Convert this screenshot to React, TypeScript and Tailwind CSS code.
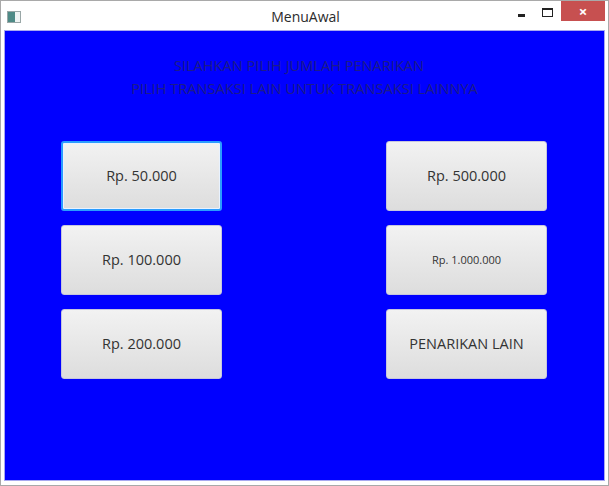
import React from 'react';

const amountsLeft = ['Rp. 50.000', 'Rp. 100.000', 'Rp. 200.000'];

function AmountButton({ label, focused = false, small = false }: { label: string; focused?: boolean; small?: boolean }) {
  return (
    <button
      className={`w-[161px] h-[70px] rounded-[3px] bg-gradient-to-b from-[#f2f2f2] to-[#dddddd] text-[#333333] flex items-center justify-center ${
        focused ? 'border-2 border-[#2a9cff] shadow-[inset_0_0_0_1px_#e8f2ff]' : 'border border-[#c6c6de]'
      } ${small ? 'text-[11px]' : 'text-[14.5px]'}`}
      style={{ fontFamily: '"Open Sans", "Noto Sans", sans-serif' }}
    >
      {label}
    </button>
  );
}

export default function App() {
  return (
    <div
      className="w-[609px] h-[486px] bg-white border border-[#a9a9a9] flex flex-col"
      style={{ fontFamily: '"Open Sans", "Noto Sans", sans-serif' }}
    >
      {/* title bar */}
      <div className="h-[29px] grid grid-cols-[1fr_auto_1fr] items-start">
        <div className="mt-[10px] ml-[6px] w-[14px] h-[12px] border border-[#9aa7a7] bg-[#dfe6e6] flex">
          <div className="w-[7px] h-full bg-[#4e8a86]" />
          <div className="flex-1 bg-[#eef3f3]" />
        </div>
        <div className="text-[14px] text-[#2b2b2b] mt-[5px] pl-[2px]">MenuAwal</div>
        <div className="flex items-start justify-end">
          <div className="w-[7px] h-[3px] bg-[#222] mt-[13px] mr-[17px]" />
          <div className="w-[11px] h-[9px] border border-[#222] border-t-2 mt-[7px] mr-[8px]" />
          <div className="w-[44px] h-[20px] bg-[#c75050] flex items-center justify-center text-white text-[15px] leading-none font-bold mr-[3px]">
            ×
          </div>
        </div>
      </div>

      {/* content */}
      <div className="flex-1 mx-[3px] mb-[4px] bg-[#0000ff] border border-[#a8a8f0] flex flex-col">
        <div className="pt-[23px] flex flex-col items-center text-[14.6px] leading-[23px] text-[#1c1c88]">
          <div className="pr-[11px]">SILAHKAN PILIH JUMLAH PENARIKAN</div>
          <div>PILIH TRANSAKSI LAIN UNTUK TRANSAKSI LAINNYA</div>
        </div>
        <div className="mt-[41px] pl-[56px] pr-[57px] flex justify-between">
          <div className="flex flex-col gap-[14px]">
            {amountsLeft.map((a, i) => (
              <AmountButton key={a} label={a} focused={i === 0} />
            ))}
          </div>
          <div className="flex flex-col gap-[14px]">
            <AmountButton label="Rp. 500.000" />
            <AmountButton label="Rp. 1.000.000" small />
            <AmountButton label="PENARIKAN LAIN" />
          </div>
        </div>
      </div>
    </div>
  );
}
